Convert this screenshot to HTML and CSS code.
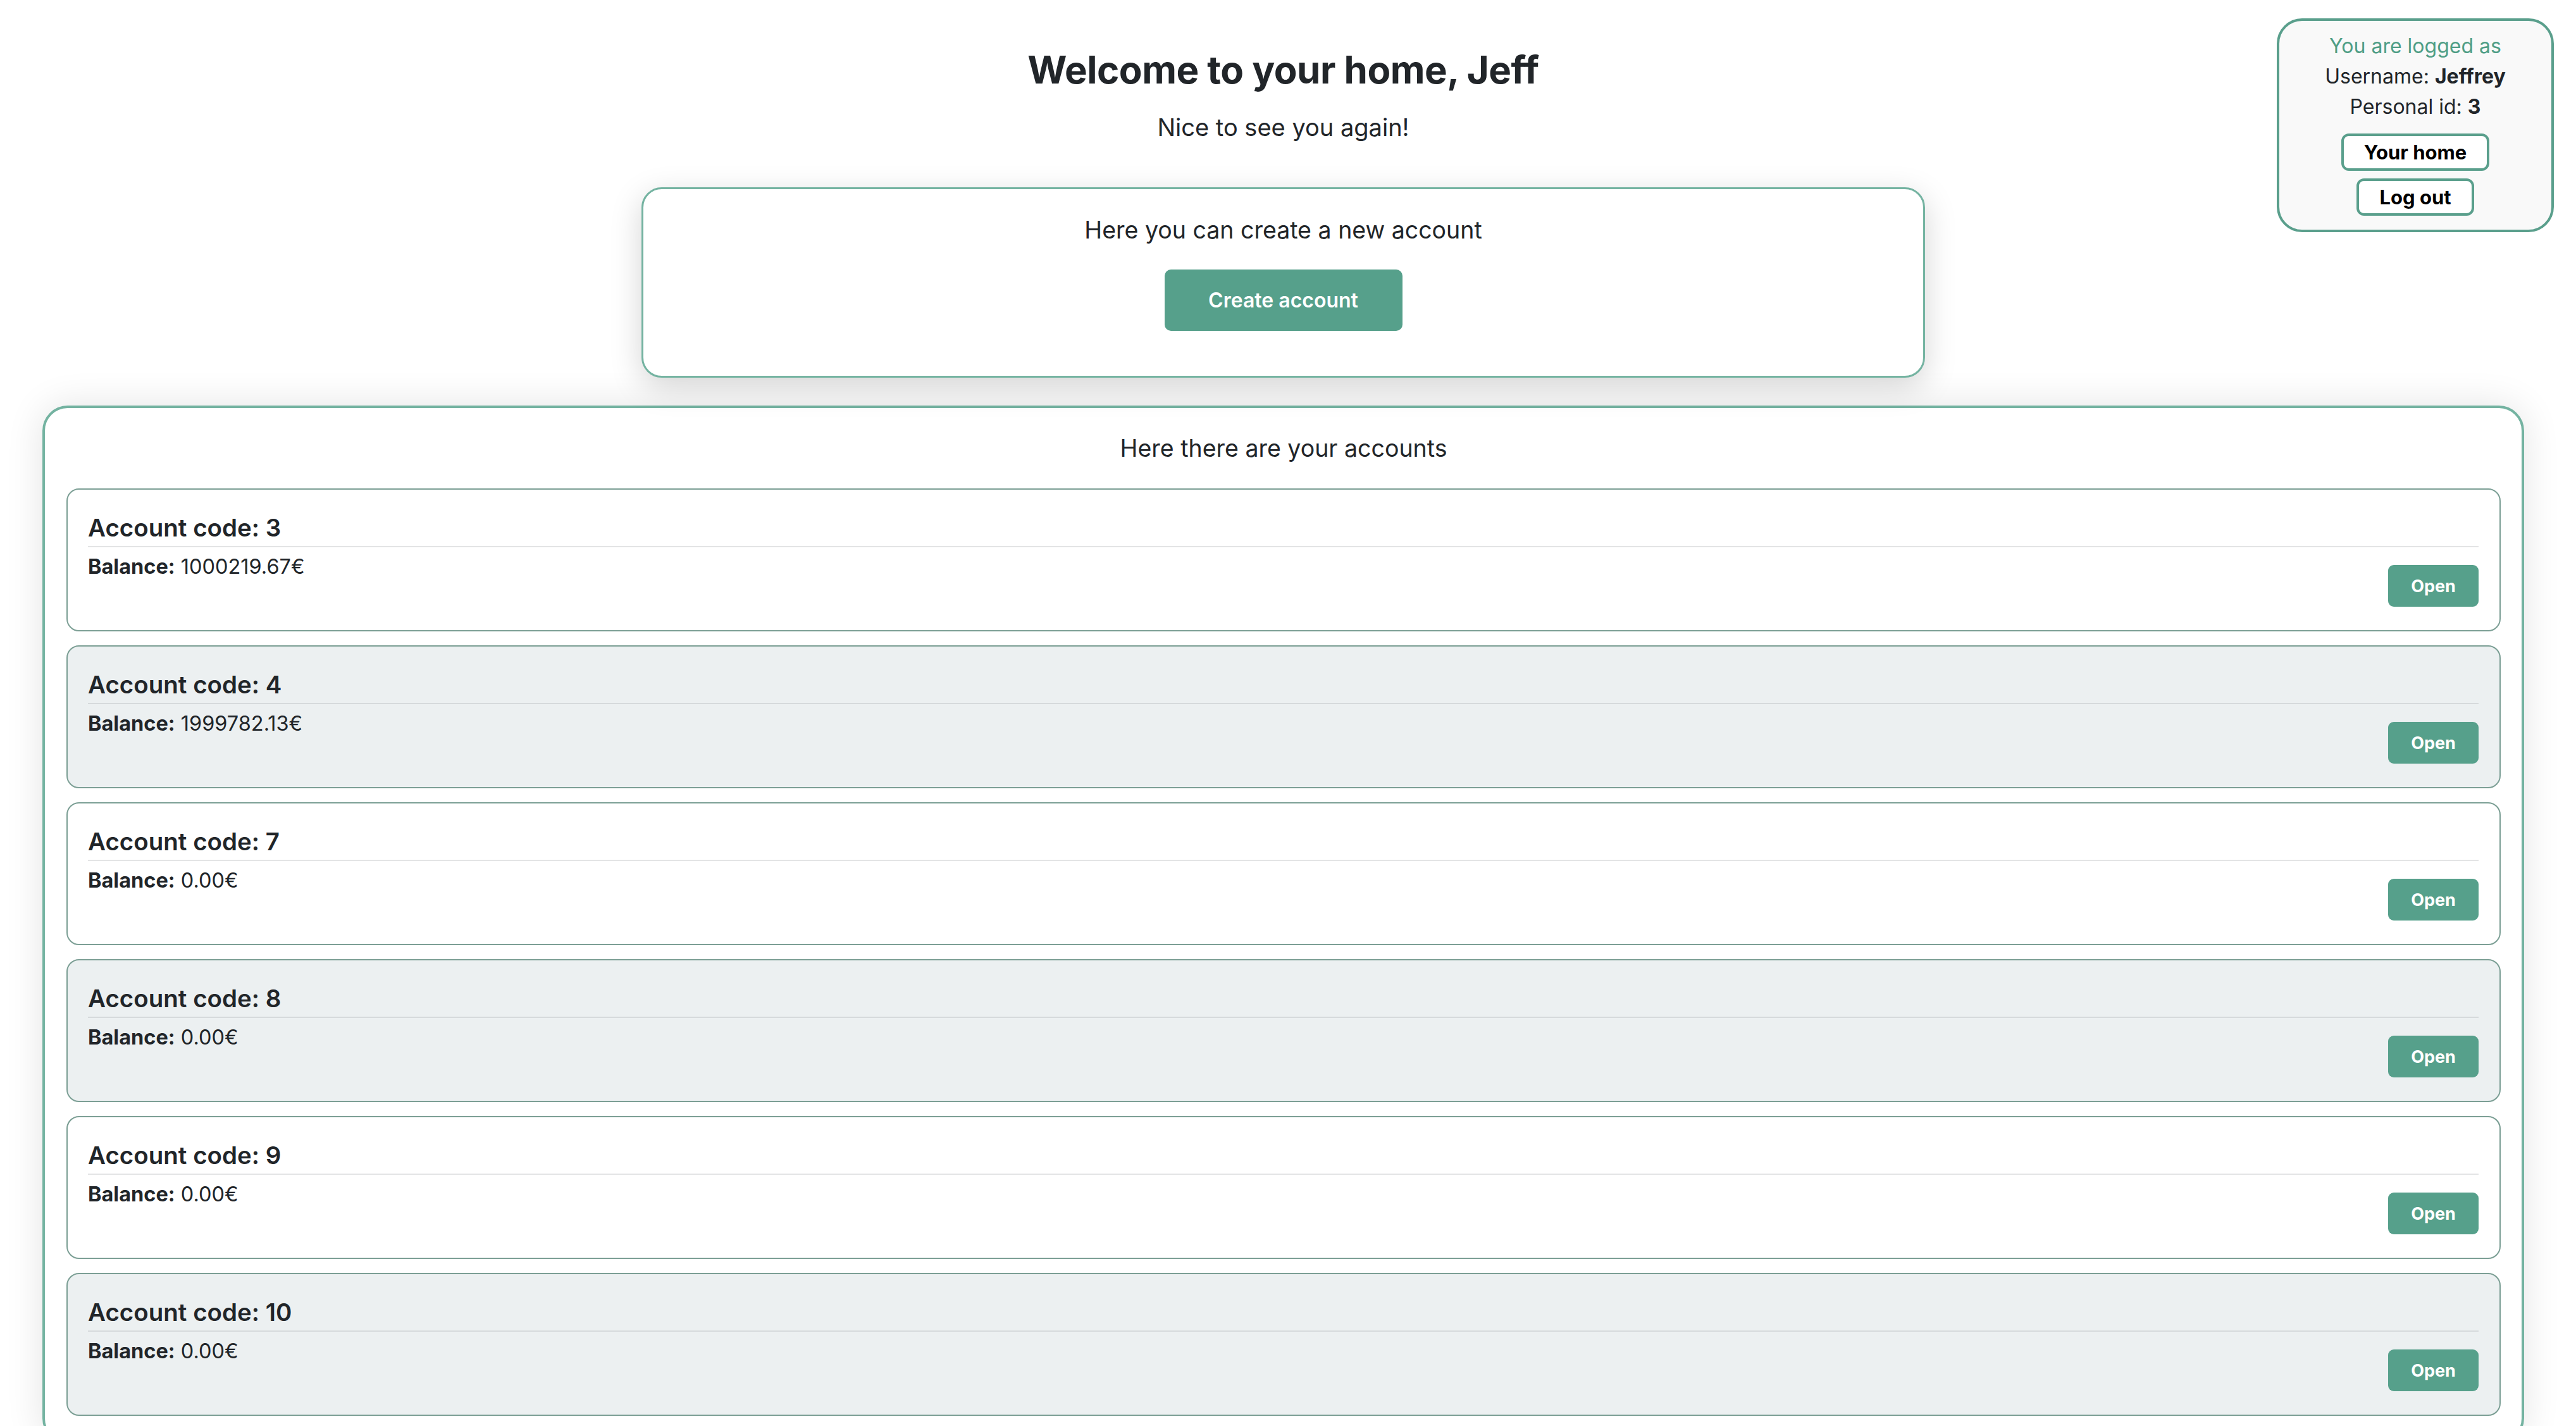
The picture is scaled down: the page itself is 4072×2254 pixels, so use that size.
FILE: index.html
```html
<!DOCTYPE html>
<html lang="en">
<head>
<meta charset="utf-8">
<title>Home</title>
<link rel="stylesheet" href="styles.css">
</head>
<body>
<aside class="session">
  <div class="session-line session-title">You are logged as</div>
  <div class="session-line">Username: <b>Jeffrey</b></div>
  <div class="session-line">Personal id: <b>3</b></div>
  <div class="session-actions">
    <button class="outline-btn">Your home</button>
    <button class="outline-btn">Log out</button>
  </div>
</aside>
<main class="page">
  <h1 class="welcome">Welcome to your home, Jeff</h1>
  <p class="subtitle">Nice to see you again!</p>
  <section class="create-card">
    <p class="card-text">Here you can create a new account</p>
    <button class="primary-btn">Create account</button>
  </section>
  <section class="accounts">
    <p class="card-text">Here there are your accounts</p>
    <div class="account-list">
      <div class="account">
        <h5 class="account-title">Account code: 3</h5>
        <div class="account-body">
          <p class="balance"><b>Balance:</b> 1000219.67€</p>
          <button class="open-btn">Open</button>
        </div>
      </div>
      <div class="account alt">
        <h5 class="account-title">Account code: 4</h5>
        <div class="account-body">
          <p class="balance"><b>Balance:</b> 1999782.13€</p>
          <button class="open-btn">Open</button>
        </div>
      </div>
      <div class="account">
        <h5 class="account-title">Account code: 7</h5>
        <div class="account-body">
          <p class="balance"><b>Balance:</b> 0.00€</p>
          <button class="open-btn">Open</button>
        </div>
      </div>
      <div class="account alt">
        <h5 class="account-title">Account code: 8</h5>
        <div class="account-body">
          <p class="balance"><b>Balance:</b> 0.00€</p>
          <button class="open-btn">Open</button>
        </div>
      </div>
      <div class="account">
        <h5 class="account-title">Account code: 9</h5>
        <div class="account-body">
          <p class="balance"><b>Balance:</b> 0.00€</p>
          <button class="open-btn">Open</button>
        </div>
      </div>
      <div class="account alt">
        <h5 class="account-title">Account code: 10</h5>
        <div class="account-body">
          <p class="balance"><b>Balance:</b> 0.00€</p>
          <button class="open-btn">Open</button>
        </div>
      </div>
    </div>
  </section>
</main>
</body>
</html>
```
FILE: styles.css
```css
* { box-sizing: border-box; }

html, body {
  margin: 0;
  padding: 0;
  background: #ffffff;
}

body {
  font-family: Inter, "Noto Sans", "Liberation Sans", sans-serif;
  color: #212529;
}

button {
  font-family: inherit;
  cursor: pointer;
}

/* session box (overlay, top right) */
.session {
  position: absolute;
  top: 29px;
  right: 35px;
  width: 438px;
  height: 338px;
  border: 4px solid #5a9f8c;
  border-radius: 40px;
  background: #f9f9f9;
  padding: 16px 0 0;
  display: flex;
  flex-direction: column;
  align-items: center;
  z-index: 2;
}

.session-line {
  font-size: 32px;
  line-height: 48px;
  text-align: center;
}

.session-line b { font-weight: 700; }

.session-title { color: #4f9e86; }

.session-actions {
  margin-top: 18px;
  display: flex;
  flex-direction: column;
  align-items: center;
  gap: 12px;
}

.outline-btn {
  background: #ffffff;
  border: 4px solid #5a9f8c;
  border-radius: 12px;
  padding: 3px 32px;
  font-size: 31px;
  line-height: 45px;
  font-weight: 700;
  color: #000000;
}

/* main column */
.page {
  padding: 74px 82px 120px 67px;
}

.welcome {
  margin: 0;
  text-align: center;
  font-size: 60px;
  line-height: 72px;
  font-weight: 700;
  letter-spacing: -0.5px;
}

.subtitle {
  margin: 28px 0 0;
  text-align: center;
  font-size: 38px;
  line-height: 54px;
}

.card-text {
  margin: 0;
  text-align: center;
  font-size: 37.5px;
  line-height: 54px;
}

.create-card {
  width: 2029px;
  margin: 68px auto 0;
  border: 3px solid #74b3a1;
  border-radius: 32px;
  background: #ffffff;
  box-shadow: 0 14px 50px rgba(0, 0, 0, 0.17);
  padding: 38px 0 71px;
  display: flex;
  flex-direction: column;
  align-items: center;
  position: relative;
}

.primary-btn {
  margin-top: 35px;
  width: 376px;
  height: 97px;
  border: none;
  border-radius: 10px;
  background: #56a08b;
  color: #ffffff;
  font-size: 32px;
  font-weight: 600;
}

.accounts {
  margin-top: 44px;
  border: 4px solid #74b3a1;
  border-radius: 40px;
  background: transparent;
  box-shadow: 0 0 60px rgba(0, 0, 0, 0.11);
  padding: 37px 33px 40px 34px;
}

.account-list {
  margin-top: 36px;
  display: flex;
  flex-direction: column;
  gap: 22px;
}

.account {
  background: #ffffff;
  border: 2px solid #7c9f95;
  border-radius: 20px;
  padding: 36px 33px 37px 32px;
}

.account.alt { background: #ecf0f1; }

.account-title {
  margin: 0;
  font-size: 38.5px;
  line-height: 48px;
  font-weight: 600;
  padding-bottom: 5px;
  border-bottom: 2px solid #e3e4e5;
}

.account.alt .account-title { border-bottom-color: #d6dadc; }

.account-body {
  margin-top: 8px;
  display: flex;
  justify-content: space-between;
  align-items: flex-start;
}

.balance {
  margin: 0;
  font-size: 32.5px;
  line-height: 46px;
}

.balance b { font-weight: 700; }

.open-btn {
  margin-top: 20px;
  width: 143px;
  height: 66px;
  border: none;
  border-radius: 9px;
  background: #56a08b;
  color: #ffffff;
  font-size: 27px;
  font-weight: 700;
}
```
